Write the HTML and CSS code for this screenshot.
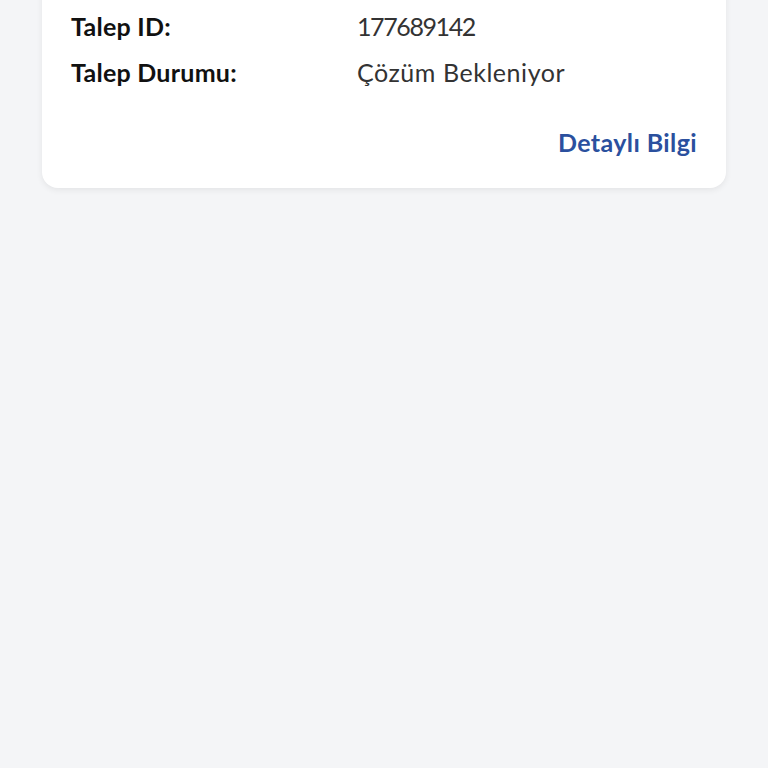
FILE: index.html
```html
<!DOCTYPE html>
<html lang="tr">
<head>
<meta charset="UTF-8" />
<meta name="viewport" content="width=device-width, initial-scale=1" />
<title>Talep Detayı</title>
<link rel="stylesheet" href="styles.css">
</head>
<body>
  <div class="card">
    <div class="info">
      <span class="label">Talep ID:</span>
      <span class="value number">177689142</span>
      <span class="label">Talep Durumu:</span>
      <span class="value">Çözüm Bekleniyor</span>
    </div>
    <div class="actions">
      <a class="more" href="#">Detaylı Bilgi</a>
    </div>
  </div>
</body>
</html>
```

FILE: styles.css
```css
html, body {
  margin: 0;
  height: 100%;
}
body {
  background-color: #f4f5f7;
  font-family: Lato, "Open Sans", sans-serif;
  overflow: hidden;
}
.card {
  margin: -20px 42px 0;
  padding: 23px 29px 23px;
  background-color: #fff;
  border-radius: 16px;
  box-shadow: 0 2px 6px rgba(0, 0, 0, 0.07);
}
.info {
  display: grid;
  grid-template-columns: 286px 1fr;
  line-height: 46px;
  font-size: 25px;
}
.label {
  font-weight: 700;
  color: #111;
  letter-spacing: 0.25px;
}
.value {
  color: #333;
  letter-spacing: 0.55px;
}
.value.number {
  letter-spacing: -1.4px;
}
.actions {
  margin-top: 24px;
  display: flex;
  justify-content: flex-end;
  line-height: 46px;
}
.more {
  font-size: 25px;
  font-weight: 700;
  color: #2b509e;
  letter-spacing: 0.4px;
  text-decoration: none;
}
```
